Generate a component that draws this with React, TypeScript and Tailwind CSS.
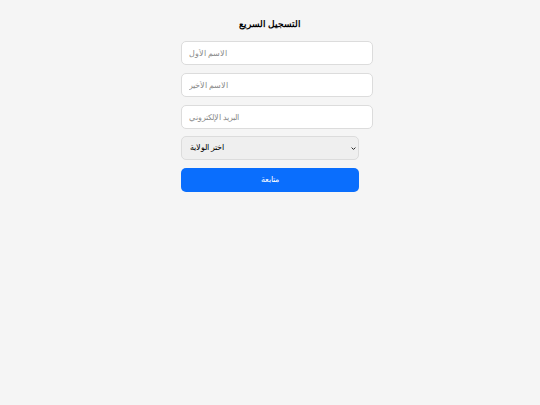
import { useState } from "react";

const states = ["اختر الولاية", "الجزائر", "وهران", "قسنطينة"];

const App = () => {
  const [form, setForm] = useState({ first: "", last: "", email: "", state: "" });

  const update = (key: keyof typeof form) => (e: { target: { value: string } }) =>
    setForm(prev => ({ ...prev, [key]: e.target.value }));

  return (
    <div className="min-h-[405px] w-full bg-[#f5f5f5] font-['Liberation_Sans',Arial,sans-serif]">
      <div className="mx-auto flex w-[178px] flex-col pt-[16px]">
        <h1 className="mb-[9px] text-center text-[8.5px] font-bold leading-[16px] text-black">
          التسجيل السريع
        </h1>
        <div className="flex flex-col gap-[8px]">
          <input
            value={form.first}
            onChange={update("first")}
            placeholder="الاسم الأول"
            className="h-[24px] w-[192px] rounded-[5px] border border-[#dcdcdc] bg-white px-[7px] text-[8px] placeholder:text-[#8a8a8a] outline-none"
          />
          <input
            value={form.last}
            onChange={update("last")}
            placeholder="الاسم الأخير"
            className="h-[24px] w-[192px] rounded-[5px] border border-[#dcdcdc] bg-white px-[7px] text-[8px] placeholder:text-[#8a8a8a] outline-none"
          />
          <input
            value={form.email}
            onChange={update("email")}
            placeholder="البريد الإلكتروني"
            className="h-[24px] w-[192px] rounded-[5px] border border-[#dcdcdc] bg-white px-[7px] text-[8px] placeholder:text-[#8a8a8a] outline-none"
          />
          <div className="relative -mt-[1px] flex w-full">
            <select
              value={form.state}
              onChange={update("state")}
              className="block h-[24px] w-full appearance-none rounded-[5px] border border-[#dcdcdc] bg-[#efefef] px-[8px] text-[8px] text-black outline-none"
            >
              {states.map((s, i) => (
                <option key={s} value={i === 0 ? "" : s}>
                  {s}
                </option>
              ))}
            </select>
            <svg
              viewBox="0 0 8 8"
              className="pointer-events-none absolute right-[3px] top-[10px] h-[5px] w-[5px]"
            >
              <path d="M1 2.5 L4 5.5 L7 2.5" fill="none" stroke="#222" strokeWidth="1.6" />
            </svg>
          </div>
          <button className="h-[24px] w-full rounded-[5px] bg-[#0a6efd] text-[8px] text-white">
            متابعة
          </button>
        </div>
      </div>
    </div>
  );
};

export default App;
